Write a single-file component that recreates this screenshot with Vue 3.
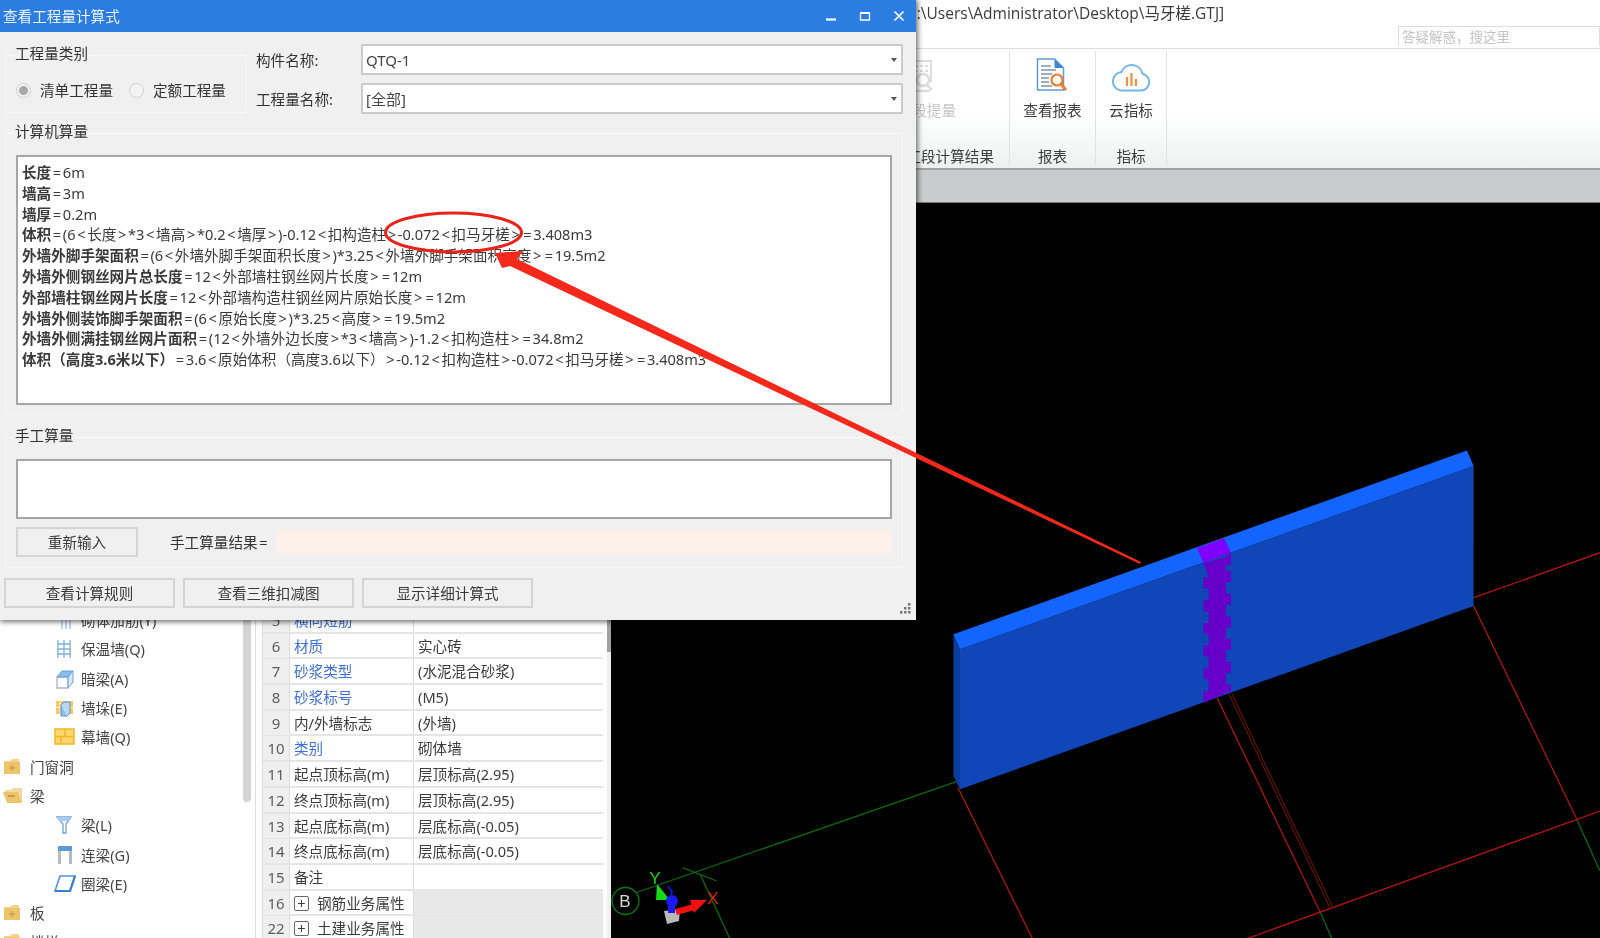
<script setup>
const tokens = (text) =>
  text.split(/([<>=])/).filter(Boolean).map((t) => ({ t, sym: /^[<>=]$/.test(t) }))

const formula = [
  ['长度', '=6m'],
  ['墙高', '=3m'],
  ['墙厚', '=0.2m'],
  ['体积', '=(6<长度>*3<墙高>*0.2<墙厚>)-0.12<扣构造柱>-0.072<扣马牙槎>=3.408m3'],
  ['外墙外脚手架面积', '=(6<外墙外脚手架面积长度>)*3.25<外墙外脚手架面积高度>=19.5m2'],
  ['外墙外侧钢丝网片总长度', '=12<外部墙柱钢丝网片长度>=12m'],
  ['外部墙柱钢丝网片长度', '=12<外部墙构造柱钢丝网片原始长度>=12m'],
  ['外墙外侧装饰脚手架面积', '=(6<原始长度>)*3.25<高度>=19.5m2'],
  ['外墙外侧满挂钢丝网片面积', '=(12<外墙外边长度>*3<墙高>)-1.2<扣构造柱>=34.8m2'],
  ['体积（高度3.6米以下）', '=3.6<原始体积（高度3.6以下）>-0.12<扣构造柱>-0.072<扣马牙槎>=3.408m3'],
].map(([bold, rest]) => ({ bold, parts: tokens(rest) }))

const tree = [
  { label: '砌体加筋(Y)', icon: 'rebar', child: true },
  { label: '保温墙(Q)', icon: 'ladder', child: true },
  { label: '暗梁(A)', icon: 'box', child: true },
  { label: '墙垛(E)', icon: 'pier', child: true },
  { label: '幕墙(Q)', icon: 'curtain', child: true },
  { label: '门窗洞', icon: 'closed' },
  { label: '梁', icon: 'open' },
  { label: '梁(L)', icon: 'funnel', child: true },
  { label: '连梁(G)', icon: 'lintel', child: true },
  { label: '圈梁(E)', icon: 'ring', child: true },
  { label: '板', icon: 'closed' },
  { label: '楼梯', icon: 'closed' },
]

const rows = [
  { n: 5, name: '横向短筋', link: true, value: '' },
  { n: 6, name: '材质', link: true, value: '实心砖' },
  { n: 7, name: '砂浆类型', link: true, value: '(水泥混合砂浆)' },
  { n: 8, name: '砂浆标号', link: true, value: '(M5)' },
  { n: 9, name: '内/外墙标志', value: '(外墙)' },
  { n: 10, name: '类别', link: true, value: '砌体墙' },
  { n: 11, name: '起点顶标高(m)', value: '层顶标高(2.95)' },
  { n: 12, name: '终点顶标高(m)', value: '层顶标高(2.95)' },
  { n: 13, name: '起点底标高(m)', value: '层底标高(-0.05)' },
  { n: 14, name: '终点底标高(m)', value: '层底标高(-0.05)' },
  { n: 15, name: '备注', value: '' },
  { n: 16, name: '钢筋业务属性', expand: true, value: '' },
  { n: 22, name: '土建业务属性', expand: true, value: '' },
]

const teeth = (() => {
  const left = []
  const right = []
  for (let i = 0; i < 6; i++) {
    const a = 570 + 22.7 * i
    right.push(`1226,${a} 1231,${a} 1231,${Math.min(a + 11, 690)} 1226,${Math.min(a + 11, 690)}`)
    const b = 576.5 + 22.7 * i
    left.unshift(`1208.6,${b + 11} 1203.5,${b + 11} 1203.5,${b} 1208.6,${b}`)
  }
  return `1203.5,561.7 1208.6,561 ${'1226,556'} 1231,551.7 1231,564 1226,564 ${right.join(' ')} 1231,690 1203.5,701.7 ${left.join(' ')}`
})()
</script>

<template>
  <div class="app">
    <header class="topbar">
      <span class="path">C:\Users\Administrator\Desktop\马牙槎.GTJ]</span>
      <div class="search">答疑解惑，搜这里</div>
    </header>

    <section class="ribbon">
      <div class="rgroup rgroup-first">
        <div class="rtool">
          <svg class="faded-icon" width="34" height="32" viewBox="0 0 34 32">
            <rect x="9" y="1" width="20" height="20" fill="none" stroke="#ddd" stroke-width="2" />
            <path d="M13 6h3M18 6h3M23 6h3M13 11h3M18 11h3M23 11h3" stroke="#ddd" stroke-width="2" />
            <circle cx="21" cy="20" r="6" fill="#fff" stroke="#ddd" stroke-width="2.500" />
            <path d="M25 25l5 5M6 31h22" stroke="#ddd" stroke-width="2.500" />
          </svg>
          <span class="faded-label">段提量</span>
        </div>
        <div class="rlabel">工段计算结果</div>
      </div>
      <div class="rgroup rgroup-report">
        <div class="rtool">
          <svg width="32" height="34" viewBox="0 0 32 34">
            <path d="M1.500 1h17l9 9v22h-26z" fill="#fff" stroke="#5c9bd8" stroke-width="1.500" />
            <path d="M18.500 1l9 9h-9z" fill="#3f86cc" />
            <path d="M5 8h10M5 12h15M5 16h11M5 20h8M5 24h8M5 28h11" stroke="#7d97ad" stroke-width="1.300" />
            <circle cx="21" cy="22" r="5.500" fill="#fff" stroke="#ef7d2c" stroke-width="2.200" />
            <path d="M25 26l5 6" stroke="#ef7d2c" stroke-width="2.800" />
          </svg>
          <span>查看报表</span>
        </div>
        <div class="rlabel">报表</div>
      </div>
      <div class="rgroup rgroup-index">
        <div class="rtool">
          <svg width="40" height="28" viewBox="0 0 40 28">
            <path d="M10 26.500h20a8.500 8.500 0 0 0 1.500-16.800A11 11 0 0 0 10.500 8 9.300 9.300 0 0 0 10 26.500z" fill="none" stroke="#73b6ea" stroke-width="2" />
            <path d="M16 13v9M20.500 9v13M25 15v7" stroke="#f0903c" stroke-width="2.200" />
          </svg>
          <span>云指标</span>
        </div>
        <div class="rlabel">指标</div>
      </div>
    </section>

    <div class="band"></div>

    <main class="workspace">
      <nav class="tree">
        <div v-for="item in tree" :key="item.label" class="node" :class="{ child: item.child }">
          <svg class="node-icon" width="22" height="20" viewBox="0 0 22 20">
            <template v-if="item.icon === 'rebar'">
              <path d="M8 1v18M12 1v18M16 1v18M7 6h10" stroke="#80aedc" fill="none" />
            </template>
            <template v-else-if="item.icon === 'ladder'">
              <path d="M4 1v18M10 1v18M16 1v18M3 5h14M3 10h14M3 15h14" stroke="#7fb0e2" stroke-width="1.300" fill="none" />
            </template>
            <template v-else-if="item.icon === 'box'">
              <path d="M3 8h11v11H3z" fill="#fff" stroke="#aab4bf" stroke-width="1.300" />
              <path d="M3 8l5-6h11l-5 6z" fill="#8bbdea" stroke="#6b9fd4" />
              <path d="M14 8l5-6v11l-5 6z" fill="#d6e6f6" stroke="#6b9fd4" />
            </template>
            <template v-else-if="item.icon === 'pier'">
              <rect x="2" y="3" width="17" height="13" fill="#fbc95a" />
              <path d="M2 9.500h17M6 3v13M15 3v13" stroke="#fff" stroke-width=".8" />
              <path d="M7 7h6v11H7z" fill="#8fc0ee" stroke="#4e8fd0" />
              <path d="M7 7l3-3h6v11l-3 3" fill="#b7d7f4" stroke="#4e8fd0" />
            </template>
            <template v-else-if="item.icon === 'curtain'">
              <rect x="1" y="2" width="19" height="15" fill="#ffd76e" stroke="#f5b520" stroke-width="1.500" />
              <path d="M1 9.500h19M11 2v7.500M7 9.500V17" stroke="#f5b520" stroke-width="1.500" fill="none" />
            </template>
            <template v-else-if="item.icon === 'closed'">
              <path d="M1 4h6l2-2h7v3h1v12H1z" fill="#f5d48c" />
              <rect x="1" y="5" width="16" height="12" fill="#eec36a" />
              <path d="M6 11h6M9 8v6" stroke="#c9a050" stroke-width="1.300" />
            </template>
            <template v-else-if="item.icon === 'open'">
              <path d="M2 4h6l2-2h9v15H5z" fill="#f3d9a0" />
              <path d="M0 6h15l4 11H4z" fill="#eec36a" />
              <path d="M5 10h7" stroke="#a98a4c" stroke-width="1.300" />
            </template>
            <template v-else-if="item.icon === 'funnel'">
              <path d="M3 2h14l-5 7v9H9V9z" fill="#fff" stroke="#6ea3dc" stroke-width="1.300" />
              <path d="M3 2h14l-3 4H6z" fill="#a9cdf0" />
            </template>
            <template v-else-if="item.icon === 'lintel'">
              <path d="M4 1h14v18h-3V6H7v13H4z" fill="#b4bcc4" />
              <rect x="4" y="1" width="14" height="5" fill="#5d9ad8" />
            </template>
            <template v-else>
              <path d="M6 2h15l-5 15H1z" fill="#fff" stroke="#4f93da" stroke-width="1.600" />
              <path d="M1 17h15l5-15" fill="none" stroke="#3a7fcc" stroke-width="2.200" />
            </template>
          </svg>
          <span>{{ item.label }}</span>
        </div>
        <div class="tree-scroll"></div>
      </nav>

      <section class="props">
        <div class="grid">
          <div v-for="row in rows" :key="row.n" class="row">
            <div class="num">{{ row.n }}</div>
            <div class="name" :class="{ link: row.link }">
              <span v-if="row.expand" class="plus">+</span>{{ row.name }}
            </div>
            <div class="val" :class="{ shaded: row.expand }">{{ row.value }}</div>
          </div>
        </div>
        <div class="prop-scroll"><i></i></div>
      </section>

      <svg class="scene" viewBox="611 202 989 736" preserveAspectRatio="none">
        <g fill="none" stroke-width="1.300">
          <path d="M956.500 780.700L612 900M682.700 866.700L716.700 880M700 873L730 938M1320 910.700L1332 938M1577 819L1600 870" stroke="#0b6b0b" />
          <path d="M1473.600 596.700L1600 551.700M1473.600 605L1577.400 819.300M958 786.700L1032.600 938M1217 696.700L1320 910.700M1246 938L1600 810" stroke="#b0160e" />
          <path d="M1229 693L1330 906.700M1232 693L1333 906.700" stroke="#5c1008" />
        </g>
        <polygon points="953.500,633.300 960,648.300 960,788.300 953.500,775" fill="#0c3d9c" />
        <polygon points="960,648.300 1473.600,465 1473.600,605 960,788.300" fill="#1046b8" />
        <polygon points="953.500,633.300 1467,449.500 1473.600,465 960,648.300" fill="#1464ff" />
        <polygon :points="teeth" fill="#6600c8" />
        <polygon points="1197,547.300 1224,537.300 1231,551.700 1203.500,561.700" fill="#8000ff" />

        <circle cx="625.500" cy="900" r="13.500" fill="#000" stroke="#0c7a0c" stroke-width="1.300" />
        <text x="625" y="906" class="axis-b">B</text>
        <polygon points="664,910 680,908 679,920 667,923" fill="#b9b9b9" />
        <polygon points="657,883 670,899 656,899" fill="#18d818" />
        <path d="M668 885l4 6-3 10" stroke="#0a18d0" stroke-width="2" fill="none" />
        <circle cx="672" cy="900" r="6" fill="#1a1af0" />
        <rect x="668" y="902" width="7" height="10" fill="#1a1af0" />
        <path d="M676 911l18-5" stroke="#f01010" stroke-width="6" />
        <polygon points="690,899 707,899 694,912" fill="#f01010" />
        <text x="655" y="883" class="axis-y">Y</text>
        <text x="713" y="903" class="axis-x">X</text>
      </svg>
    </main>

    <section class="dialog">
      <div class="dtitle">
        <span>查看工程量计算式</span>
        <div class="wincontrols">
          <svg width="12" height="12" viewBox="0 0 12 12"><path d="M1 9.500h10" stroke="#fff" stroke-width="2.200" /></svg>
          <svg width="12" height="12" viewBox="0 0 12 12"><path d="M1.500 3h9v7h-9z" fill="none" stroke="#fff" stroke-width="1.300" /><path d="M1.500 3h9" stroke="#fff" stroke-width="2" /></svg>
          <svg width="12" height="12" viewBox="0 0 12 12"><path d="M1.500 1.500l9 9M10.500 1.500l-9 9" stroke="#fff" stroke-width="1.700" /></svg>
        </div>
      </div>
      <div class="dbody">
        <div class="dtop">
          <div class="group group-kind">
            <span class="legend">工程量类别</span>
            <div class="radios">
              <label class="radio"><i class="dot on"></i>清单工程量</label>
              <label class="radio"><i class="dot"></i>定额工程量</label>
            </div>
          </div>
          <div class="selects">
            <div class="field">
              <span class="flabel">构件名称:</span>
              <div class="combo"><span>QTQ-1</span><i class="caret"></i></div>
            </div>
            <div class="field">
              <span class="flabel">工程量名称:</span>
              <div class="combo"><span>[全部]</span><i class="caret"></i></div>
            </div>
          </div>
        </div>

        <div class="group group-auto">
          <span class="legend">计算机算量</span>
          <div class="textbox">
            <div v-for="line in formula" :key="line.bold" class="fline"><b>{{ line.bold }}</b><template v-for="(p, i) in line.parts" :key="i"><span v-if="p.sym" class="sym">{{ p.t }}</span><template v-else>{{ p.t }}</template></template></div>
          </div>
        </div>

        <div class="group group-manual">
          <span class="legend">手工算量</span>
          <div class="textbox manual"></div>
          <div class="manual-row">
            <button class="btn reset">重新输入</button>
            <span class="result-label">手工算量结果<span class="sym">=</span></span>
            <div class="result"></div>
          </div>
        </div>

        <div class="actions">
          <button class="btn action">查看计算规则</button>
          <button class="btn action">查看三维扣减图</button>
          <button class="btn action">显示详细计算式</button>
        </div>
      </div>
      <svg class="grip" width="12" height="12" viewBox="0 0 12 12" fill="#777">
        <rect x="8" y="0" width="2.500" height="2.500" /><rect x="4" y="4" width="2.500" height="2.500" /><rect x="8" y="4" width="2.500" height="2.500" />
        <rect x="0" y="8" width="2.500" height="2.500" /><rect x="4" y="8" width="2.500" height="2.500" /><rect x="8" y="8" width="2.500" height="2.500" />
      </svg>
    </section>

    <svg class="annotation" viewBox="0 0 1600 938">
      <ellipse cx="453.500" cy="232.500" rx="68" ry="19.500" fill="none" stroke="#e8231a" stroke-width="3" />
      <polygon points="495,253 523,251 517,259 1141,562 1140,564 510,266 502,268" fill="#f5281c" />
    </svg>
  </div>
</template>

<style>
html, body { margin: 0; background: #000; }
</style>

<style scoped>
.app {
  position: relative;
  width: 1600px;
  height: 938px;
  overflow: hidden;
  display: flex;
  flex-direction: column;
  background: #fff;
  color: #333;
  font: 14.6px/20px "Noto Sans", "Noto Sans CJK SC", sans-serif;
  filter: blur(0.4px);
}
.topbar {
  flex: 0 0 49px;
  box-sizing: border-box;
  display: flex;
  justify-content: space-between;
  padding-left: 907px;
  border-bottom: 1px solid #ddd;
}
.path {
  margin-top: 3px;
  font-family: "Open Sans", "Noto Sans CJK SC", sans-serif;
  font-size: 15.5px;
  color: #3a3a3a;
}
.search {
  align-self: flex-end;
  box-sizing: border-box;
  width: 202px;
  height: 20px;
  margin-bottom: 2px;
  padding-left: 3px;
  border: 1px solid #ddd;
  border-bottom: 0;
  color: #c4c4c4;
  font-size: 13.500px;
  line-height: 20px;
}
.ribbon {
  flex: 0 0 121px;
  box-sizing: border-box;
  display: flex;
  padding-top: 2px;
  background: linear-gradient(#fff 55%, #eef0f0);
  border-bottom: 2px solid #9fa3a6;
}
.rgroup {
  box-sizing: border-box;
  height: 115px;
  display: flex;
  flex-direction: column;
  align-items: center;
  border-right: 1px solid #dfe1e2;
}
.rgroup-first { width: 1010px; align-items: flex-end; padding-right: 15px; }
.rgroup-report { width: 86px; }
.rgroup-index { width: 71px; }
.rtool {
  flex: 1;
  display: flex;
  flex-direction: column;
  align-items: center;
  justify-content: flex-end;
  gap: 8px;
  padding-bottom: 26px;
  color: #3c3c3c;
}
.rgroup-first .rtool { align-items: flex-end; margin-right: 38px; }
.faded-icon { margin-right: 20px; }
.faded-label { color: #c6c6c6; }
.rlabel { color: #3c3c3c; }
.band {
  flex: 0 0 32px;
  background: #c9cbce;
  border-bottom: 1px solid #777;
}
.workspace {
  flex: 1;
  min-height: 0;
  display: flex;
  background: #000;
}
.tree {
  position: relative;
  flex: 0 0 256px;
  box-sizing: border-box;
  padding: 402.500px 0 0;
  background: #fff;
  border-right: 1px solid #ddd;
  color: #444;
}
.node {
  display: flex;
  align-items: center;
  height: 29.300px;
  gap: 5px;
  padding-left: 3px;
}
.node.child { padding-left: 54px; gap: 5px; }
.node-icon { flex: none; }
.tree-scroll {
  position: absolute;
  top: 0;
  right: 4px;
  width: 8px;
  height: 599px;
  border-radius: 0 0 4px 4px;
  background: #d4d4d4;
}
.props {
  flex: 0 0 354px;
  box-sizing: border-box;
  display: flex;
  padding: 405px 0 0 6px;
  background: #fff;
}
.grid {
  flex: 0 0 340px;
  border-left: 1px solid #ddd;
}
.row {
  display: grid;
  grid-template-columns: 27px 124px 1fr;
  height: 25.700px;
  box-sizing: border-box;
  border-bottom: 2px solid #e4e6e6;
  line-height: 24px;
  color: #3c3c3c;
}
.num {
  background: #efefef;
  border-right: 1px solid #ddd;
  color: #5c5c5c;
  text-align: center;
  font-size: 15px;
}
.name {
  padding-left: 4px;
  border-right: 1px solid #ddd;
  white-space: nowrap;
}
.name.link { color: #3d6fd6; }
.val { padding-left: 4px; white-space: nowrap; }
.val.shaded { background: #e8e8e8; }
.plus {
  display: inline-block;
  box-sizing: border-box;
  width: 15px;
  height: 15px;
  margin-right: 8px;
  border: 1px solid #666;
  border-radius: 2px;
  line-height: 12px;
  text-align: center;
  vertical-align: 0;
}
.prop-scroll {
  flex: 1;
  margin-left: 4px;
  background: #f0f0f0;
  width: 4px;
}
.prop-scroll i {
  display: block;
  height: 44px;
  background: #a0a0a0;
}
.scene {
  flex: 1;
  height: 736px;
  display: block;
  background: #000;
}
.axis-b { font: 17px "Liberation Sans", sans-serif; fill: #d9d9d9; text-anchor: middle; }
.axis-y { font: 17px "Liberation Sans", sans-serif; fill: #16d416; text-anchor: middle; }
.axis-x { font: 17px "Liberation Sans", sans-serif; fill: #f01818; text-anchor: middle; }

.dialog {
  position: absolute;
  left: 0;
  top: 0;
  width: 916px;
  height: 620px;
  display: flex;
  flex-direction: column;
  background: #f0f0f0;
  box-shadow: 1px 1px 5px 1px rgba(0, 0, 0, .55);
}
.dtitle {
  flex: 0 0 32px;
  display: flex;
  align-items: center;
  justify-content: space-between;
  padding: 0 11px 0 3px;
  background: #2b7de1;
  color: #eaf2fc;
}
.wincontrols { display: flex; gap: 22px; }
.dbody {
  display: flex;
  flex-direction: column;
  padding: 0 13px 0 5px;
}
.dtop { display: flex; align-items: flex-start; }
.group {
  position: relative;
  box-sizing: border-box;
  border: 1px solid #f8f8f8;
  border-radius: 2px;
}
.legend {
  position: absolute;
  left: 8px;
  top: -13px;
  padding: 0 1px;
  background: #f0f0f0;
}
.group-kind {
  flex: 0 0 242px;
  height: 58px;
  margin-top: 23px;
}
.radios {
  display: flex;
  gap: 16px;
  margin: 24px 0 0 10px;
}
.radio { display: flex; align-items: center; gap: 9px; white-space: nowrap; }
.dot {
  flex: none;
  box-sizing: border-box;
  width: 15px;
  height: 15px;
  border: 1px solid #d0d0d0;
  border-radius: 50%;
  background: #f3f3f3;
}
.dot.on { background: radial-gradient(circle, #a8a8a8 0 4px, #f3f3f3 5px); }
.selects {
  flex: 1;
  display: flex;
  flex-direction: column;
  gap: 8px;
  padding: 12px 0 0 9px;
}
.field { display: flex; align-items: center; }
.flabel { flex: 0 0 105px; }
.combo {
  flex: 1;
  box-sizing: border-box;
  height: 31px;
  display: flex;
  align-items: center;
  justify-content: space-between;
  padding: 0 4px 0 3px;
  background: #fff;
  border: 2px solid #cbcbcb;
  color: #444;
  font-size: 15px;
}
.caret {
  width: 0;
  height: 0;
  border: 3.500px solid transparent;
  border-top: 4px solid #555;
  border-bottom: 0;
}
.group-auto {
  height: 282px;
  margin-top: 19px;
  padding: 21px 10px 0 10px;
}
.textbox {
  box-sizing: border-box;
  height: 250px;
  padding: 5px 4px;
  background: #fff;
  border: 2px solid #a6a6a6;
  overflow: hidden;
}
.fline { height: 20.800px; line-height: 20.800px; white-space: nowrap; color: #3a3a3a; }
.fline b { font-weight: 700; }
.sym { padding: 0 1.650px; }
.group-manual {
  height: 131px;
  margin-top: 22px;
  padding: 21px 10px 0 10px;
}
.manual { height: 60px; }
.manual-row {
  display: flex;
  align-items: center;
  margin-top: 8px;
}
.btn {
  box-sizing: border-box;
  height: 30px;
  padding: 0;
  background: #f0f0f0;
  border: 2px solid #d4d4d4;
  color: #3a3a3a;
  font: inherit;
}
.reset { flex: 0 0 122px; }
.result-label { margin-left: 32px; }
.result {
  flex: 1;
  height: 24px;
  margin-left: 7px;
  background: #fbf1e8;
}
.actions {
  display: flex;
  gap: 8px;
  margin: 10px 0 0 -1px;
}
.action { width: 171px; }
.grip { position: absolute; right: 4px; bottom: 5px; }
.annotation {
  position: absolute;
  inset: 0;
  width: 1600px;
  height: 938px;
  pointer-events: none;
}
</style>
